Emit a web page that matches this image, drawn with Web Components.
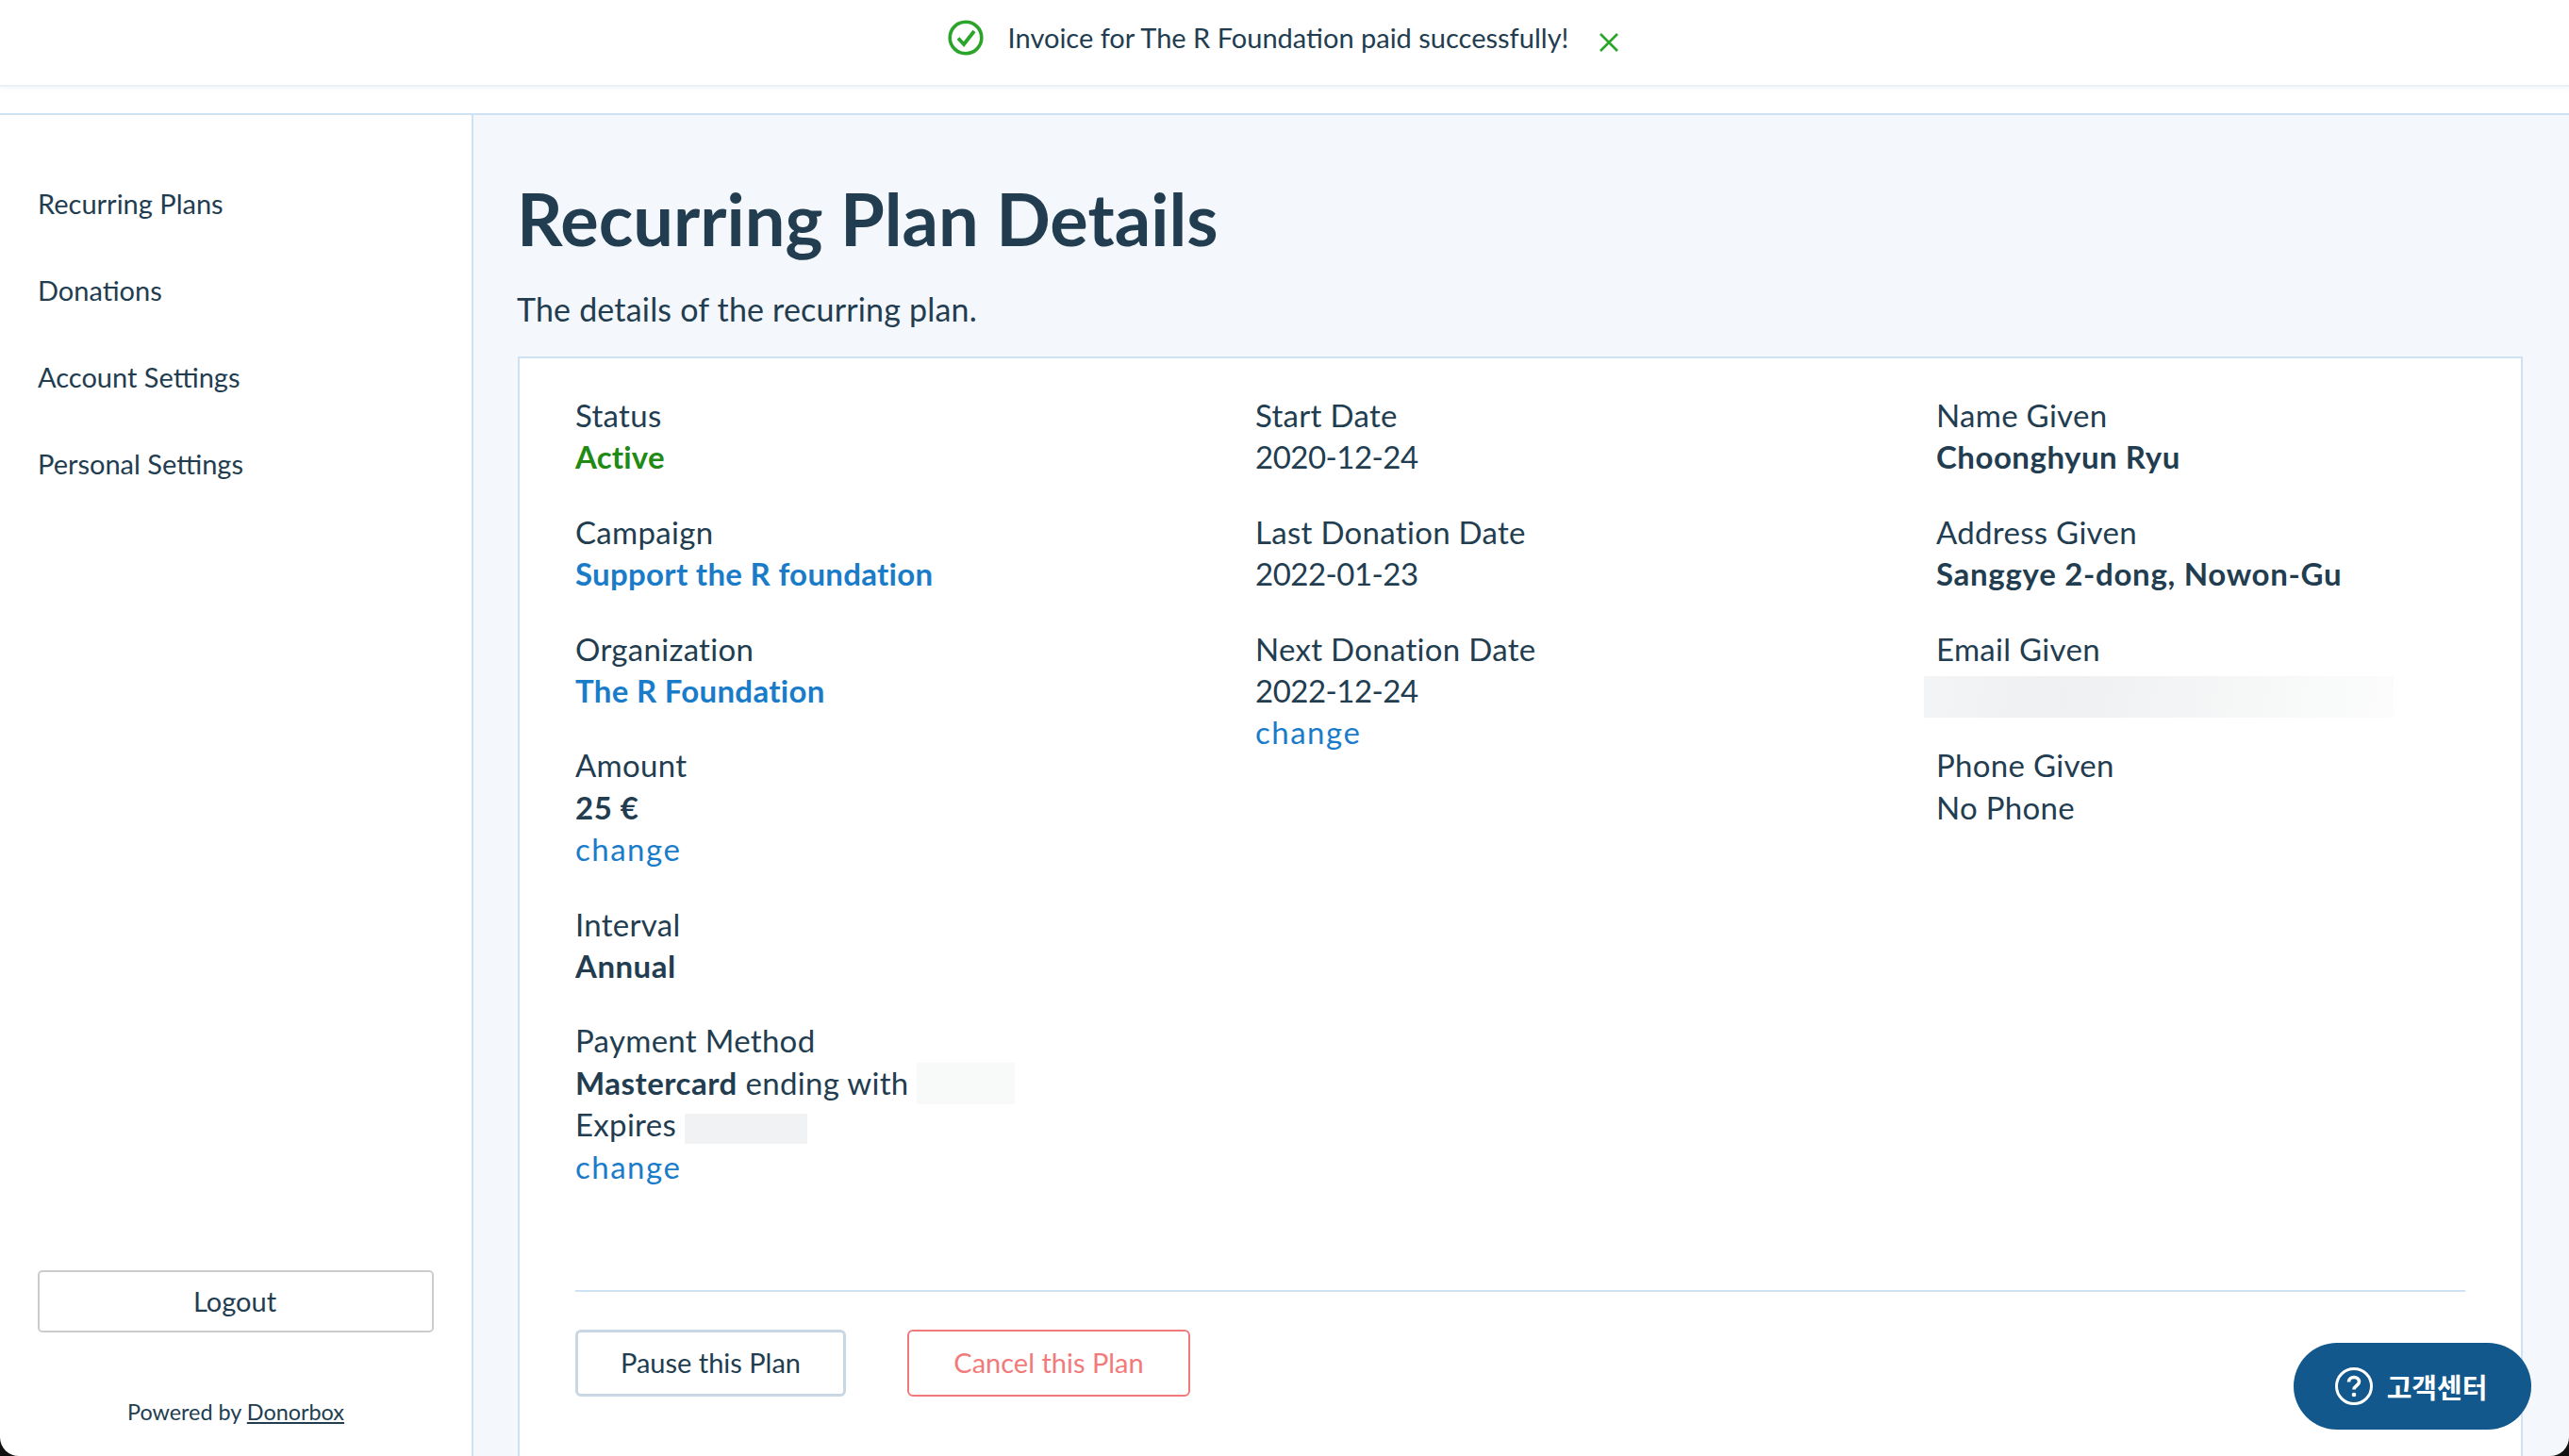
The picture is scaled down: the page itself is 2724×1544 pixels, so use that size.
<!doctype html>
<html lang="en">
<head>
<meta charset="utf-8">
<title>Recurring Plan Details</title>
<style>
  html, body { margin: 0; height: 100%; }
  body {
    width: 2724px;
    height: 1544px;
    overflow: hidden;
    position: relative;
    font-family: Lato, "Noto Sans", sans-serif;
    color: #223d50;
    background: #fff;
  }
</style>
</head>
<body>
<toast-bar>Invoice for The R Foundation paid successfully!</toast-bar>
<page-frame>
  <side-nav slot="side">
    <nav-link>Recurring Plans</nav-link>
    <nav-link>Donations</nav-link>
    <nav-link>Account Settings</nav-link>
    <nav-link>Personal Settings</nav-link>
  </side-nav>
  <plan-details>
    <plan-column>
      <plan-field label="Status"><b class="ok">Active</b></plan-field>
      <plan-field label="Campaign"><b class="link">Support the R foundation</b></plan-field>
      <plan-field label="Organization"><b class="link">The R Foundation</b></plan-field>
      <plan-field label="Amount"><b>25 €</b><br><change-link></change-link></plan-field>
      <plan-field label="Interval"><b>Annual</b></plan-field>
      <plan-field label="Payment Method"><b>Mastercard</b> ending with <blur-box w="104" h="44" tone="#f8f9f9" drop="-4"></blur-box><br>Expires <blur-box w="130" h="32" tone="#f0f2f3"></blur-box><br><change-link></change-link></plan-field>
    </plan-column>
    <plan-column>
      <plan-field label="Start Date"><span class="num">2020-12-24</span></plan-field>
      <plan-field label="Last Donation Date"><span class="num">2022-01-23</span></plan-field>
      <plan-field label="Next Donation Date"><span class="num">2022-12-24</span><br><change-link></change-link></plan-field>
    </plan-column>
    <plan-column>
      <plan-field label="Name Given"><b>Choonghyun Ryu</b></plan-field>
      <plan-field label="Address Given"><b class="wide">Sanggye 2-dong, Nowon-Gu</b></plan-field>
      <plan-field label="Email Given"><blur-box w="498" h="44" tone="linear-gradient(100deg,#f3f4f5,#eef0f1 30%,#f9fafa 85%,#fcfcfc)" shift="-13" drop="2"></blur-box></plan-field>
      <plan-field label="Phone Given">No Phone</plan-field>
    </plan-column>
  </plan-details>
</page-frame>
<help-button>고객센터</help-button>
<window-corners></window-corners>

<script>
class ToastBar extends HTMLElement {
  constructor() {
    super()
    this.attachShadow({ mode: 'open' })
    this.shadowRoot.innerHTML = `
      <style>
        :host {
          display: flex;
          align-items: center;
          justify-content: center;
          height: 90px;
          padding-right: 2px;
          background: #fff;
          border-bottom: 2px solid #eaf1f8;
          box-shadow: 0 2px 6px rgba(207, 226, 243, .3);
          position: relative;
          font-size: 29px;
          color: #223d50;
        }
        .check { width: 38px; height: 38px; margin-right: 26px; margin-top: -10px; flex: none; }
        .text { margin-top: -11px; }
        .close { width: 22px; height: 20px; margin-left: 32px; flex: none; margin-top: 0; }
      </style>
      <svg class="check" viewBox="0 0 38 38" fill="none" stroke="#2aa52a">
        <circle cx="19" cy="19" r="16.8" stroke-width="3.6"/>
        <path d="M11 19.5l6 6.5 11-14" stroke-width="3.8"/>
      </svg>
      <span class="text"><slot></slot></span>
      <svg class="close" viewBox="0 0 22 20" fill="none" stroke="#2aa52a" stroke-width="2.6">
        <path d="M2 1l18 18M20 1L2 19"/>
      </svg>
    `
  }
}

class PageFrame extends HTMLElement {
  constructor() {
    super()
    this.attachShadow({ mode: 'open' })
    this.shadowRoot.innerHTML = `
      <style>
        :host {
          display: grid;
          grid-template-columns: 500px 1fr;
          grid-template-rows: 30px 1fr;
          height: 1452px;
        }
        .strip { background: #fff; border-bottom: 2px solid #cfe2f3; }
        .strip.left { border-right: 2px solid #cfe2f3; width: 500px; }
        .side { min-height: 0; }
        .main {
          background: #f4f7fb;
          border-left: 2px solid #cfe2f3;
          padding: 60px 47px 0 47px;
          min-height: 0;
          overflow: hidden;
        }
        h1 {
          margin: 0 0 0 -1px;
          font-size: 75.8px;
          line-height: 100px;
          font-weight: 700;
          color: #223d50;
        }
        p {
          margin: 24px 0 0 -1px;
          font-size: 34px;
          letter-spacing: .18px;
          line-height: 44px;
          color: #223d50;
        }
        ::slotted(plan-details) { margin-top: 28px; }
      </style>
      <div class="strip left"></div>
      <div class="strip"></div>
      <div class="side"><slot name="side"></slot></div>
      <div class="main">
        <h1>Recurring Plan Details</h1>
        <p>The details of the recurring plan.</p>
        <slot></slot>
      </div>
    `
  }
}

class SideNav extends HTMLElement {
  constructor() {
    super()
    this.attachShadow({ mode: 'open' })
    this.shadowRoot.innerHTML = `
      <style>
        :host {
          display: flex;
          flex-direction: column;
          height: 100%;
          box-sizing: border-box;
          padding: 48px 40px 0;
        }
        .links { display: flex; flex-direction: column; flex: 1; }
        .logout {
          height: 66px;
          box-sizing: border-box;
          display: flex;
          align-items: center;
          justify-content: center;
          padding: 0 2px 2px 0;
          border: 2px solid #ccc;
          border-radius: 5px;
          font-size: 29px;
          color: #223d50;
        }
        .powered {
          margin: 67px 0 30px;
          text-align: center;
          font-size: 23.4px;
          line-height: 34px;
          color: #223d50;
        }
        .powered a { color: inherit; text-decoration: underline; }
      </style>
      <div class="links"><slot></slot></div>
      <div class="logout">Logout</div>
      <div class="powered">Powered by <a>Donorbox</a></div>
    `
  }
}

class NavLink extends HTMLElement {
  constructor() {
    super()
    this.attachShadow({ mode: 'open' })
    this.shadowRoot.innerHTML = `
      <style>
        :host {
          display: block;
          height: 92px;
          line-height: 92px;
          font-size: 29px;
          color: #223d50;
        }
      </style>
      <slot></slot>
    `
  }
}

class PlanDetails extends HTMLElement {
  constructor() {
    super()
    this.attachShadow({ mode: 'open' })
    this.shadowRoot.innerHTML = `
      <style>
        :host {
          display: block;
          width: 2126px;
          height: 1200px;
          box-sizing: border-box;
          background: #fff;
          border: 2px solid #cfe2f3;
          padding: 38px 59px 0;
          font-size: 33px;
          letter-spacing: .3px;
          line-height: 44.4px;
          color: #223d50;
        }
        .cols {
          display: grid;
          grid-template-columns: 721px 722px 1fr;
          height: 950px;
        }
        hr {
          margin: 0;
          border: 0;
          height: 2px;
          background: #cfe2f3;
        }
        .actions { display: flex; gap: 65px; margin-top: 40px; }
        .btn {
          height: 71px;
          box-sizing: border-box;
          display: flex;
          align-items: center;
          justify-content: center;
          background: #fff;
          border-radius: 6px;
          font-size: 29px;
          letter-spacing: 0;
        }
        .pause { width: 287px; border: 3px solid #c8d7e3; color: #223d50; }
        .cancel { width: 300px; border: 2px solid #f27a7a; color: #f27a7a; }
      </style>
      <div class="cols"><slot></slot></div>
      <hr>
      <div class="actions">
        <div class="btn pause">Pause this Plan</div>
        <div class="btn cancel">Cancel this Plan</div>
      </div>
    `
  }
}

class PlanColumn extends HTMLElement {
  constructor() {
    super()
    this.attachShadow({ mode: 'open' })
    this.shadowRoot.innerHTML = `
      <style>
        :host { display: flex; flex-direction: column; gap: 35px; }
      </style>
      <slot></slot>
    `
  }
}

class PlanField extends HTMLElement {
  constructor() {
    super()
    this.attachShadow({ mode: 'open' })
    this.shadowRoot.innerHTML = `
      <style>
        :host { display: block; }
        .label { display: block; }
        ::slotted(b) { letter-spacing: .5px; }
        ::slotted(.ok) { color: #1f8a14; letter-spacing: .2px; }
        ::slotted(.link) { color: #1a7cc9; letter-spacing: .3px; }
        ::slotted(.wide) { letter-spacing: .7px; }
        ::slotted(.num) { letter-spacing: -.5px; }
      </style>
      <span class="label"></span>
      <slot></slot>
    `
  }

  connectedCallback() {
    this.shadowRoot.querySelector('.label').textContent = this.getAttribute('label')
  }
}

class ChangeLink extends HTMLElement {
  constructor() {
    super()
    this.attachShadow({ mode: 'open' })
    this.shadowRoot.innerHTML = `
      <style>
        :host { display: inline; color: #1a7cc9; letter-spacing: 1.5px; }
      </style>
      change
    `
  }
}

// masked personal data in the screenshot
class BlurBox extends HTMLElement {
  constructor() {
    super()
    this.attachShadow({ mode: 'open' })
    this.shadowRoot.innerHTML = `
      <style>
        :host {
          display: inline-block;
          vertical-align: middle;
          margin-top: -14px;
          margin-bottom: -14px;
        }
      </style>
    `
  }

  connectedCallback() {
    this.style.width = this.getAttribute('w') + 'px'
    this.style.height = this.getAttribute('h') + 'px'
    this.style.background = this.getAttribute('tone')
    if (this.hasAttribute('shift')) this.style.marginLeft = this.getAttribute('shift') + 'px'
    if (this.hasAttribute('drop')) this.style.transform = `translateY(${this.getAttribute('drop')}px)`
  }
}

class HelpButton extends HTMLElement {
  constructor() {
    super()
    this.attachShadow({ mode: 'open' })
    this.shadowRoot.innerHTML = `
      <style>
        :host {
          position: absolute;
          left: 2432px;
          top: 1424px;
          width: 252px;
          height: 92px;
          box-sizing: border-box;
          padding-right: 3px;
          display: flex;
          align-items: center;
          justify-content: center;
          gap: 15px;
          background: #12588c;
          border-radius: 46px;
          color: #fff;
          font-family: "Noto Sans CJK KR", sans-serif;
          font-size: 29px;
          font-weight: 700;
        }
        svg { width: 40px; height: 40px; flex: none; }
      </style>
      <svg viewBox="0 0 40 40" fill="none" stroke="#fff">
        <circle cx="20" cy="20" r="18.5" stroke-width="3"/>
        <path d="M14.5 15.5c0-3.2 2.5-5 5.5-5s5.5 1.9 5.5 4.8c0 4.2-5.5 4.2-5.5 8.2" stroke-width="3.6"/>
        <circle cx="20" cy="29" r="2.3" fill="#fff" stroke="none"/>
      </svg>
      <span><slot></slot></span>
    `
  }
}

// rounded window corners of the captured screen
class WindowCorners extends HTMLElement {
  constructor() {
    super()
    this.attachShadow({ mode: 'open' })
    this.shadowRoot.innerHTML = `
      <style>
        :host { position: absolute; inset: 0; pointer-events: none; overflow: hidden; }
        div { position: absolute; width: 20px; height: 20px; overflow: hidden; bottom: 0; }
        div::after {
          content: '';
          position: absolute;
          width: 40px;
          height: 40px;
          border-radius: 50%;
          box-shadow: 0 0 0 40px #111;
          top: -20px;
        }
        .l { left: 0; }
        .l::after { left: 0; }
        .r { right: 0; }
        .r::after { right: 0; }
      </style>
      <div class="l"></div>
      <div class="r"></div>
    `
  }
}

customElements.define('toast-bar', ToastBar)
customElements.define('page-frame', PageFrame)
customElements.define('side-nav', SideNav)
customElements.define('nav-link', NavLink)
customElements.define('plan-details', PlanDetails)
customElements.define('plan-column', PlanColumn)
customElements.define('plan-field', PlanField)
customElements.define('change-link', ChangeLink)
customElements.define('blur-box', BlurBox)
customElements.define('help-button', HelpButton)
customElements.define('window-corners', WindowCorners)
</script>
</body>
</html>
